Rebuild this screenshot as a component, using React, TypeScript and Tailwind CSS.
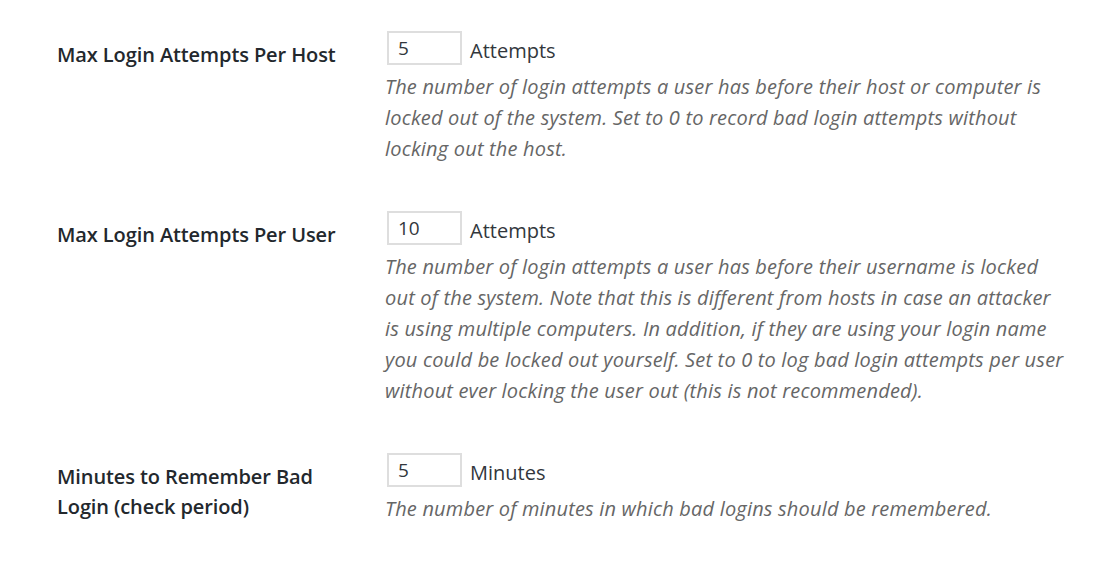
import React from "react";

type Row = {
  label: string[];
  value: string;
  unit: string;
  desc: string[];
};

const rows: Row[] = [
  {
    label: ["Max Login Attempts Per Host"],
    value: "5",
    unit: "Attempts",
    desc: [
      "The number of login attempts a user has before their host or computer is",
      "locked out of the system. Set to 0 to record bad login attempts without",
      "locking out the host.",
    ],
  },
  {
    label: ["Max Login Attempts Per User"],
    value: "10",
    unit: "Attempts",
    desc: [
      "The number of login attempts a user has before their username is locked",
      "out of the system. Note that this is different from hosts in case an attacker",
      "is using multiple computers. In addition, if they are using your login name",
      "you could be locked out yourself. Set to 0 to log bad login attempts per user",
      "without ever locking the user out (this is not recommended).",
    ],
  },
  {
    label: ["Minutes to Remember Bad", "Login (check period)"],
    value: "5",
    unit: "Minutes",
    desc: ["The number of minutes in which bad logins should be remembered."],
  },
];

export default function App() {
  return (
    <div
      className="w-[1100px] h-[564px] bg-white overflow-hidden pt-[30px] pl-[57px]"
      style={{ fontFamily: '"Open Sans", "Noto Sans", sans-serif' }}
    >
      {rows.map((r, i) => (
        <div key={i} className="flex items-start mb-[46px]">
          <div className="w-[330px] shrink-0 pt-[10px] text-[20px] leading-[30px] font-semibold text-[#23282d] -tracking-[0.1px]">
            {r.label.map((l, j) => (
              <div key={j} className="whitespace-nowrap">
                {l}
              </div>
            ))}
          </div>
          <div className="flex flex-col">
            <div className="flex items-center gap-[8px]">
              <div className="w-[75px] h-[34px] border-2 border-[#dedede] bg-white flex items-center pl-[9px] text-[19px] text-[#32373c]">
                {r.value}
              </div>
              <span className="text-[20px] text-[#32373c] mt-[6px]">{r.unit}</span>
            </div>
            <div className="mt-[5px] text-[20px] leading-[31px] italic text-[#666666] -ml-[2px] tracking-[0.18px]">
              {r.desc.map((d, j) => (
                <div key={j} className="whitespace-nowrap">
                  {d}
                </div>
              ))}
            </div>
          </div>
        </div>
      ))}
    </div>
  );
}
